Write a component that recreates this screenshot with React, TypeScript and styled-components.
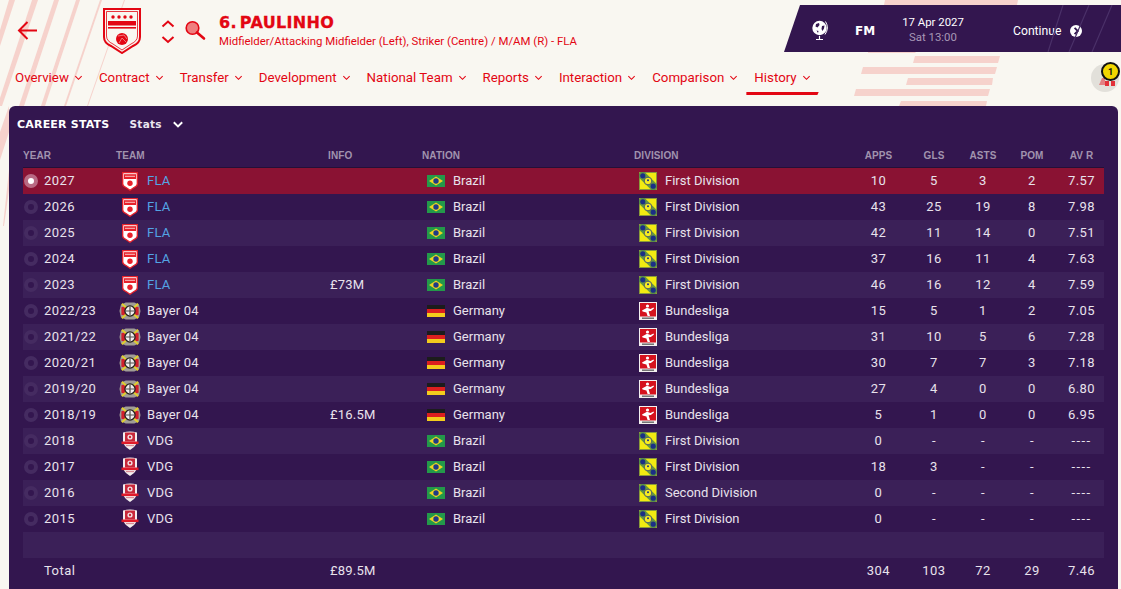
import React from "react";
import styled, { createGlobalStyle } from "styled-components";

const Global = createGlobalStyle`
  html, body { margin: 0; padding: 0; background: #f9f7f1; }
  * { box-sizing: border-box; }
`;

const Page = styled.div`
  position: relative;
  width: 1121px;
  height: 589px;
  overflow: hidden;
  background: #f9f7f1;
  font-family: Roboto, "Liberation Sans", sans-serif;
  display: flex;
  flex-direction: column;
`;
const Backdrop = styled.svg`
  position: absolute;
  left: 0;
  top: 0;
  width: 1121px;
  height: 589px;
`;
const Header = styled.header`
  position: relative;
  display: flex;
  align-items: flex-start;
  height: 62px;
`;
const BackBtn = styled.div`
  margin: 20px 0 0 17px;
  width: 21px;
  height: 21px;
`;
const Crest = styled.div`
  margin: 8px 0 0 65px;
  width: 38px;
  height: 46px;
`;
const Updown = styled.div`
  margin: 20px 0 0 20px;
  width: 14px;
  height: 24px;
`;
const SearchBtn = styled.div`
  margin: 20px 0 0 9px;
  width: 22px;
  height: 22px;
`;
const TitleBlock = styled.div`
  margin: 13px 0 0 13px;
  color: #e30613;
`;
const Name = styled.div`
  font-family: "DejaVu Sans", sans-serif;
  font-weight: 700;
  font-size: 16px;
  line-height: 20px;
  letter-spacing: 0.35px;
  word-spacing: -3px;
  -webkit-text-stroke: 0.3px #e30613;
`;
const Role = styled.div`
  font-size: 11.4px;
  line-height: 14px;
  margin-top: 1px;
  white-space: nowrap;
`;
const Status = styled.div`
  position: relative;
  margin: 5px 0 0 auto;
  width: 337px;
  height: 47px;
  padding-top: 4px;
  background: #33164f;
  clip-path: polygon(16px 0, 100% 0, 100% 100%, 0 100%);
  color: #fff;
  display: flex;
  align-items: center;
`;
const StatusLines = styled.svg`
  position: absolute;
  left: 0;
  top: 0;
  width: 337px;
  height: 47px;
`;
const GlobeBox = styled.div`
  margin-left: 27px;
  width: 18px;
  height: 22px;
`;
const FM = styled.div`
  margin-left: 26px;
  width: 24px;
  font-family: "DejaVu Sans", sans-serif;
  font-weight: 700;
  font-size: 12px;
`;
const DateBlock = styled.div`
  margin-left: 22px;
  margin-top: -2px;
  width: 64px;
  text-align: center;
  font-size: 11.4px;
  line-height: 15px;
  white-space: nowrap;
`;
const DateSub = styled.div`
  color: #a798b6;
`;
const Continue = styled.div`
  margin-left: 48px;
  display: flex;
  align-items: center;
  gap: 9px;
  font-size: 12.2px;
`;
const Nav = styled.nav`
  position: relative;
  display: flex;
  padding-left: 7px;
  height: 33px;
  color: #e30613;
`;
const NavItem = styled.div<{ $active?: boolean }>`
  display: flex;
  align-items: center;
  gap: 5px;
  padding: 0 8px;
  height: 33px;
  font-size: 13.3px;
  white-space: nowrap;
  border-bottom: 3px solid ${(p) => (p.$active ? "#e30613" : "transparent")};
  clip-path: ${(p) => (p.$active ? "polygon(0 0, 100% 0, 100% 30px, 71px 100%, 0 100%)" : "none")};
`;
const Alert = styled.div`
  position: absolute;
  right: 2px;
  top: 2px;
  width: 28px;
  height: 28px;
  border-radius: 50%;
  background: #e2e0da;
`;
const AlertCount = styled.div`
  position: absolute;
  right: -1px;
  top: -2px;
  width: 19px;
  height: 19px;
  border-radius: 50%;
  background: #f2d600;
  border: 2px solid #111;
  color: #111;
  font-size: 9px;
  font-weight: 700;
  display: flex;
  align-items: center;
  justify-content: center;
`;
const Panel = styled.main`
  position: relative;
  margin: 11px 3px 0 9px;
  flex: 1;
  background: #33164f;
  border-radius: 6px 6px 0 0;
  padding: 0 14px;
`;
const PanelTitle = styled.div`
  display: flex;
  align-items: center;
  height: 35px;
  margin-left: -6px;
  color: #fff;
  font-family: "DejaVu Sans", sans-serif;
  font-weight: 700;
`;
const PanelName = styled.span`
  font-size: 11px;
  letter-spacing: 0.2px;
  padding-top: 1px;
`;
const Picker = styled.span`
  margin-left: 20px;
  display: flex;
  align-items: center;
  gap: 10px;
  font-size: 10.5px;
  letter-spacing: 0.3px;
  color: #ece6f0;
`;
const columns = "93px 212px 94px 212px 216px 57px 54px 44px 54px 45px";
const HeadRow = styled.div`
  display: grid;
  grid-template-columns: ${columns};
  height: 27px;
  padding-top: 3px;
  align-items: center;
  border-bottom: 1px solid #241038;
  color: #a193ae;
  font-size: 10px;
  font-weight: 700;
  letter-spacing: 0.1px;
  font-family: "Liberation Sans", sans-serif;
`;
const HeadCell = styled.div<{ $center?: boolean }>`
  text-align: ${(p) => (p.$center ? "center" : "left")};
`;
const Row = styled.div<{ $tone: "sel" | "dark" | "light" }>`
  display: grid;
  grid-template-columns: ${columns};
  height: 26px;
  align-items: center;
  font-size: 13px;
  color: #e8e2ec;
  background: ${(p) => (p.$tone === "sel" ? "#8a1233" : p.$tone === "light" ? "#3b2058" : "#33164f")};
`;
const Txt = styled.span`
  padding-bottom: 2px;
`;
const YearCell = styled.div`
  display: flex;
  align-items: center;
  gap: 6px;
  padding-left: 1px;
  letter-spacing: 0.45px;
`;
const Radio = styled.span<{ $on?: boolean }>`
  width: 14px;
  height: 14px;
  border-radius: 50%;
  border: 4px solid ${(p) => (p.$on ? "#b86a83" : "#452b61")};
  background: ${(p) => (p.$on ? "#fff" : "#33164f")};
`;
const BlankRadio = styled.span`
  width: 14px;
`;
const TeamCell = styled.div`
  display: flex;
  align-items: center;
  gap: 6px;
  padding-left: 3px;
`;
const IconBox = styled.span`
  width: 22px;
  height: 22px;
  display: flex;
  align-items: center;
  justify-content: center;
`;
const TeamName = styled.span<{ $link?: boolean }>`
  padding-bottom: 2px;
  letter-spacing: 0.2px;
  color: ${(p) => (p.$link ? "#53a4e4" : "#e8e2ec")};
`;
const InfoCell = styled.div`
  padding: 0 0 2px 2px;
  letter-spacing: 0.2px;
`;
const PlaceCell = styled.div`
  display: flex;
  align-items: center;
  gap: 8px;
  padding-left: 5px;
`;
const StatCell = styled.div<{ $dashes?: boolean }>`
  text-align: center;
  padding-bottom: 2px;
  letter-spacing: ${(p) => (p.$dashes ? "1.4px" : "0.45px")};
`;

const Chev = ({ size = 9, color = "#e30613", w = 1.2 }: { size?: number; color?: string; w?: number }) => (
  <svg width={size} height={size} viewBox="0 0 10 10">
    <path d="M1.5 3.5 L5 7 L8.5 3.5" fill="none" stroke={color} strokeWidth={w} />
  </svg>
);

const FlaBadge = () => (
  <svg width="16" height="19" viewBox="0 0 16 19">
    <path d="M0.7 0.7H15.3V12Q15.3 14 12 15.5L8 18.2L4 15.5Q0.7 14 0.7 12Z" fill="#fff" stroke="#e8212b" strokeWidth="1.3" />
    <rect x="2" y="2.2" width="12" height="4.8" fill="#e8212b" />
    <rect x="3" y="3.8" width="10" height="1" fill="#f7c5c5" />
    <circle cx="8" cy="11.2" r="2.7" fill="#e8212b" />
  </svg>
);
const BayerBadge = () => (
  <svg width="23" height="20" viewBox="0 0 23 20">
    <path d="M2 3.5L7 1H16L21 3.5L22.5 10L21 16.5L16 19H7L2 16.5L0.5 10Z" fill="#a09c96" />
    <path d="M2.5 6L6.5 5V15L2.5 14ZM20.5 6L16.5 5V15L20.5 14Z" fill="#d2202c" />
    <path d="M3 2.5L20 17.5M20 2.5L3 17.5" stroke="#e0cf30" strokeWidth="2.2" />
    <circle cx="11.5" cy="10" r="6" fill="#26221f" />
    <circle cx="11.5" cy="10" r="4.6" fill="#f0eeee" />
    <path d="M11.5 5.4V14.6M6.9 10H16.1" stroke="#55504e" strokeWidth="1.3" />
  </svg>
);
const VdgBadge = () => (
  <svg width="18" height="20" viewBox="0 0 18 20">
    <path d="M2 1.5Q9 -0.5 16 1.5V12Q14 16 9 19Q4 16 2 12Z" fill="#f4eeee" />
    <rect x="4" y="1.5" width="10" height="9" fill="#c8283a" />
    <circle cx="9" cy="6" r="2.6" fill="#f2dfe2" />
    <circle cx="9" cy="6" r="1.2" fill="#c8283a" />
    <rect x="0.5" y="10.5" width="17" height="2.6" fill="#e01b2a" />
    <rect x="5" y="14" width="8" height="1.2" fill="#d98d95" />
  </svg>
);
const BrazilFlag = () => (
  <svg width="18" height="12" viewBox="0 0 18 12">
    <rect width="18" height="12" fill="#23994a" />
    <path d="M9 1.4L16 6L9 10.6L2 6Z" fill="#f0d323" />
    <circle cx="9" cy="6" r="2.7" fill="#1f3b86" />
  </svg>
);
const GermanyFlag = () => (
  <svg width="18" height="12" viewBox="0 0 18 12">
    <rect width="18" height="4" fill="#1c1c1c" />
    <rect y="4" width="18" height="4" fill="#dc1f1f" />
    <rect y="8" width="18" height="4" fill="#f3cc1d" />
  </svg>
);
const BrazilLeague = () => (
  <svg width="18" height="18" viewBox="0 0 18 18">
    <rect width="18" height="18" fill="#8a9a3a" />
    <rect x="1" y="1" width="16" height="16" fill="#f2ea12" />
    <path d="M1 1L17 17" stroke="#4f8a4a" strokeWidth="8" opacity="0.85" />
    <circle cx="3.8" cy="3.8" r="2.6" fill="#1a2f86" />
    <circle cx="14.2" cy="14.2" r="2.6" fill="#1a2f86" />
    <circle cx="9" cy="9" r="3.8" fill="#f8ee20" stroke="#1a2f86" strokeWidth="0.7" />
    <circle cx="9" cy="8.2" r="1" fill="#1a2f86" />
  </svg>
);
const Bundesliga = () => (
  <svg width="18" height="18" viewBox="0 0 18 18">
    <rect width="18" height="18" fill="#f3f0f0" />
    <rect x="1" y="1" width="16" height="13.5" fill="#d5121e" />
    <circle cx="8.5" cy="4" r="1.6" fill="#fff" />
    <path d="M3 8.5L8 5.8L11.5 7L14.5 5.5L15 6.5L11.8 9L9.6 9.2L11 14H8.6L7.4 10.6L3.6 9.6Z" fill="#fff" />
    <rect x="3" y="15.5" width="12" height="1.4" fill="#666" />
  </svg>
);

type Team = "FLA" | "Bayer 04" | "VDG";
type Rec = [string, Team, string, string, string, string, string, string, string];
const rows: Rec[] = [
  ["2027", "FLA", "", "First Division", "10", "5", "3", "2", "7.57"],
  ["2026", "FLA", "", "First Division", "43", "25", "19", "8", "7.98"],
  ["2025", "FLA", "", "First Division", "42", "11", "14", "0", "7.51"],
  ["2024", "FLA", "", "First Division", "37", "16", "11", "4", "7.63"],
  ["2023", "FLA", "£73M", "First Division", "46", "16", "12", "4", "7.59"],
  ["2022/23", "Bayer 04", "", "Bundesliga", "15", "5", "1", "2", "7.05"],
  ["2021/22", "Bayer 04", "", "Bundesliga", "31", "10", "5", "6", "7.28"],
  ["2020/21", "Bayer 04", "", "Bundesliga", "30", "7", "7", "3", "7.18"],
  ["2019/20", "Bayer 04", "", "Bundesliga", "27", "4", "0", "0", "6.80"],
  ["2018/19", "Bayer 04", "£16.5M", "Bundesliga", "5", "1", "0", "0", "6.95"],
  ["2018", "VDG", "", "First Division", "0", "-", "-", "-", "----"],
  ["2017", "VDG", "", "First Division", "18", "3", "-", "-", "----"],
  ["2016", "VDG", "", "Second Division", "0", "-", "-", "-", "----"],
  ["2015", "VDG", "", "First Division", "0", "-", "-", "-", "----"],
];
const navItems = ["Overview", "Contract", "Transfer", "Development", "National Team", "Reports", "Interaction", "Comparison", "History"];
const heads: [string, boolean][] = [
  ["YEAR", false], ["TEAM", false], ["INFO", false], ["NATION", false], ["DIVISION", false],
  ["APPS", true], ["GLS", true], ["ASTS", true], ["POM", true], ["AV R", true],
];

const toneOf = (i: number) => (i === 0 ? "sel" : i % 2 === 0 ? "light" : "dark");

export default function App() {
  return (
    <Page>
      <Global />
      <Backdrop viewBox="0 0 1121 589">
        <g fill="#f6d2cc">
          <polygon points="9,0 15,0 0,46 0,30" />
          <polygon points="32,0 38,0 2,106 0,106 0,98" />
          <polygon points="54,0 59,0 24,106 19,106" />
          <polygon points="76,0 80,0 45,106 41,106" />
          <polygon points="100,0 102,0 66,106 64,106" />
          <polygon points="124,0 125,0 88,106 87,106" />
          <polygon points="9,106 9,132 0,160 0,132" />
          <polygon points="9,170 9,190 4,226 3,226" />
          <polygon points="885,0 1018,0 1017,5 884,5" />
          <polygon points="868,52 916,52 915,53 868,53" />
          <polygon points="915,56 1000,56 998,63 913,63" />
          <polygon points="863,67 997,67 995,74 861,74" />
          <polygon points="908,78 993,78 992,85 906,85" />
          <polygon points="856,89 990,89 988,96 854,96" />
          <polygon points="901,101 987,101 986,106 899,106" />
        </g>
      </Backdrop>
      <Header>
        <BackBtn>
          <svg width="21" height="21" viewBox="0 0 21 21">
            <path d="M20 10.5H2M10.5 2L2 10.5L10.5 19" fill="none" stroke="#e30613" strokeWidth="2" />
          </svg>
        </BackBtn>
        <Crest>
          <svg width="38" height="46" viewBox="0 0 38 46">
            <path d="M1 1H37V29Q37 35 30 38L19 45L8 38Q1 35 1 29Z" fill="#f9f7f1" stroke="#e30613" strokeWidth="2" />
            <path d="M3.5 3.5H34.5V28Q34.5 33 28 36L19 42L10 36Q3.5 33 3.5 28Z" fill="none" stroke="#e30613" strokeWidth="0.8" />
            <g fill="#e30613">
              <circle cx="10" cy="9" r="1.7" /><circle cx="16" cy="9" r="1.7" /><circle cx="22" cy="9" r="1.7" /><circle cx="28" cy="9" r="1.7" />
              <rect x="5" y="13" width="28" height="4.5" />
              <rect x="5" y="19" width="28" height="1.6" />
              <circle cx="19" cy="31" r="6" />
            </g>
            <path d="M15 28L21 27L24 31M16 35L19 30L23 34" fill="none" stroke="#f7a9a9" strokeWidth="0.7" />
          </svg>
        </Crest>
        <Updown>
          <svg width="14" height="24" viewBox="0 0 14 24">
            <path d="M1.5 6.5L7 1.5L12.5 6.5M1.5 17L7 22L12.5 17" fill="none" stroke="#e30613" strokeWidth="2" />
          </svg>
        </Updown>
        <SearchBtn>
          <svg width="22" height="22" viewBox="0 0 22 22">
            <circle cx="8.5" cy="8" r="6.3" fill="#ef7f7f" stroke="#e30613" strokeWidth="1.6" />
            <path d="M13 12.5L20 18.5" stroke="#e30613" strokeWidth="2.6" strokeLinecap="round" />
          </svg>
        </SearchBtn>
        <TitleBlock>
          <Name>6. PAULINHO</Name>
          <Role>Midfielder/Attacking Midfielder (Left), Striker (Centre) / M/AM (R) - FLA</Role>
        </TitleBlock>
        <Status>
          <StatusLines viewBox="0 0 337 47">
            <g stroke="#4a3068" strokeWidth="1.2" fill="none">
              <path d="M279 0L264 47M305 0L285 47M328 0L308 47" />
            </g>
          </StatusLines>
          <GlobeBox>
            <svg width="18" height="22" viewBox="0 0 18 22">
              <circle cx="8.5" cy="8" r="7.2" fill="#fff" />
              <path d="M5 4L8 3L8.5 5L6.5 7.5L4.5 6.5ZM11 6L13.5 5.5L13 8.5L11.5 11L10.5 9ZM5.5 10.5L7.5 11L7 13Z" fill="#33164f" />
              <path d="M14.5 1.5Q18.5 8 14 14.5" stroke="#fff" fill="none" />
              <path d="M8.5 16V19M5 19.5H12" stroke="#fff" strokeWidth="1.2" />
            </svg>
          </GlobeBox>
          <FM>FM</FM>
          <DateBlock>
            <div>17 Apr 2027</div>
            <DateSub>Sat 13:00</DateSub>
          </DateBlock>
          <Continue>
            Continue
            <svg width="12" height="12" viewBox="0 0 12 12">
              <circle cx="6" cy="6" r="6" fill="#fff" />
              <path d="M4.6 2.8L7.8 6L4.6 9.2" fill="none" stroke="#33164f" strokeWidth="1.8" />
            </svg>
          </Continue>
        </Status>
      </Header>
      <Nav>
        {navItems.map((n) => (
          <NavItem key={n} $active={n === "History"}>
            {n}
            <Chev />
          </NavItem>
        ))}
        <Alert>
          <svg width="28" height="28" viewBox="0 0 28 28">
            <g fill="#e3323a">
              <circle cx="14" cy="10" r="2.6" opacity="0.55" />
              <path d="M8 21L11 14H14L14 21Z" opacity="0.55" />
              <rect x="14" y="17" width="4" height="5" />
              <rect x="20" y="17" width="4" height="5" />
            </g>
          </svg>
          <AlertCount>1</AlertCount>
        </Alert>
      </Nav>
      <Panel>
        <PanelTitle>
          <PanelName>CAREER STATS</PanelName>
          <Picker>
            Stats
            <Chev size={12} color="#fff" w={1.6} />
          </Picker>
        </PanelTitle>
        <HeadRow>
          {heads.map(([h, c]) => (
            <HeadCell key={h} $center={c}>{h}</HeadCell>
          ))}
        </HeadRow>
        {rows.map((r, i) => {
          const team = r[1];
          const isBr = team !== "Bayer 04";
          return (
            <Row key={r[0] + i} $tone={toneOf(i)}>
              <YearCell>
                <Radio $on={i === 0} />
                <Txt>{r[0]}</Txt>
              </YearCell>
              <TeamCell>
                <IconBox>{team === "FLA" ? <FlaBadge /> : team === "VDG" ? <VdgBadge /> : <BayerBadge />}</IconBox>
                <TeamName $link={team === "FLA"}>{team}</TeamName>
              </TeamCell>
              <InfoCell>{r[2]}</InfoCell>
              <PlaceCell>
                {isBr ? <BrazilFlag /> : <GermanyFlag />}
                <Txt>{isBr ? "Brazil" : "Germany"}</Txt>
              </PlaceCell>
              <PlaceCell>
                {isBr ? <BrazilLeague /> : <Bundesliga />}
                <Txt>{r[3]}</Txt>
              </PlaceCell>
              {r.slice(4).map((v, j) => (
                <StatCell key={j} $dashes={v === "----"}>{v}</StatCell>
              ))}
            </Row>
          );
        })}
        <Row $tone="light" />
        <Row $tone="dark">
          <YearCell>
            <BlankRadio />
            <Txt>Total</Txt>
          </YearCell>
          <div />
          <InfoCell>£89.5M</InfoCell>
          <div />
          <div />
          <StatCell>304</StatCell>
          <StatCell>103</StatCell>
          <StatCell>72</StatCell>
          <StatCell>29</StatCell>
          <StatCell>7.46</StatCell>
        </Row>
      </Panel>
    </Page>
  );
}
